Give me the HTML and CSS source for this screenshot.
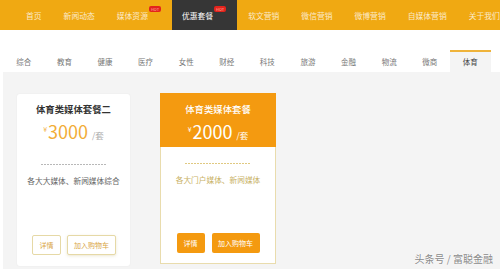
FILE: index.html
```html
<!DOCTYPE html>
<html lang="zh-CN">
<head>
    <meta charset="UTF-8">
    <meta name="viewport" content="width=device-width, initial-scale=1.0">
    <title>优惠套餐</title>
    <link rel="stylesheet" href="styles.css">
</head>
<body>
    <div class="nav">
        <a class="nav-item">首页</a>
        <a class="nav-item">新闻动态</a>
        <a class="nav-item">媒体资源<span class="hot">HOT</span></a>
        <a class="nav-item active">优惠套餐<span class="hot">HOT</span></a>
        <a class="nav-item">软文营销</a>
        <a class="nav-item">微信营销</a>
        <a class="nav-item">微博营销</a>
        <a class="nav-item">自媒体营销</a>
        <a class="nav-item">关于我们</a>
    </div>

    <div class="tabs">
        <div class="tab">综合</div>
        <div class="tab">教育</div>
        <div class="tab">健康</div>
        <div class="tab">医疗</div>
        <div class="tab">女性</div>
        <div class="tab">财经</div>
        <div class="tab">科技</div>
        <div class="tab">旅游</div>
        <div class="tab">金融</div>
        <div class="tab">物流</div>
        <div class="tab">微商</div>
        <div class="tab active">体育</div>
    </div>

    <div class="panel">
        <div class="card">
            <div class="card-head">
                <div class="card-title">体育类媒体套餐二</div>
                <div class="price"><span class="yen">¥</span>3000 <span class="unit">/套</span></div>
            </div>
            <div class="line"></div>
            <div class="desc">各大大媒体、新闻媒体综合</div>
            <div class="btns">
                <button class="btn">详情</button>
                <button class="btn wide">加入购物车</button>
            </div>
        </div>

        <div class="card featured">
            <div class="card-head">
                <div class="card-title">体育类媒体套餐</div>
                <div class="price"><span class="yen">¥</span>2000 <span class="unit">/套</span></div>
            </div>
            <div class="line"></div>
            <div class="desc">各大门户媒体、新闻媒体</div>
            <div class="btns">
                <button class="btn">详情</button>
                <button class="btn wide">加入购物车</button>
            </div>
        </div>
    </div>

    <div class="watermark">头条号 / 富聪金融</div>
</body>
</html>
```

FILE: styles.css
```css
body {
    font-family: "Noto Sans CJK SC", "Noto Sans", sans-serif;
    margin: 0;
    width: 500px;
    height: 269px;
    overflow: hidden;
    position: relative;
    background: #fff;
}
.nav {
    display: flex;
    height: 30px;
    padding-left: 15px;
    background: #f0a912;
    white-space: nowrap;
}
.nav-item {
    display: flex;
    align-items: center;
    padding: 0 11px;
    font-size: 7.8px;
    color: rgba(255, 255, 255, 0.78);
}
.nav-item.active {
    padding-left: 10px;
    background: #363636;
    color: #fff;
}
.hot {
    align-self: flex-start;
    margin: 6px 0 0 1px;
    width: 12px;
    height: 6px;
    line-height: 6px;
    border-radius: 2px;
    background: #e3231c;
    color: #ffb0a0;
    font-size: 4px;
    text-align: center;
}
.tabs {
    display: flex;
    margin-top: 20px;
    padding-left: 3.5px;
}
.tab {
    width: 40.6px;
    height: 20px;
    line-height: 20px;
    border-top: 2px solid transparent;
    text-align: center;
    font-size: 7.5px;
    color: #777;
}
.tab.active {
    border-top-color: #efb33a;
    background: #f4f4f4;
    color: #444;
}
.panel {
    display: flex;
    align-items: flex-start;
    gap: 30px;
    height: 176px;
    margin-left: 3px;
    padding: 21px 0 0 14px;
    background: #f4f4f4;
}
.card {
    display: flex;
    flex-direction: column;
    width: 113px;
    height: 161px;
    margin-top: 1px;
    padding-bottom: 11px;
    background: #fff;
    border-radius: 3px;
    box-shadow: 0 0 2px rgba(0, 0, 0, 0.06);
    text-align: center;
}
.card-head {
    padding-top: 8px;
}
.card-title {
    font-size: 9.4px;
    line-height: 14px;
    font-weight: bold;
    color: #333;
}
.price {
    margin-top: 2px;
    line-height: 22px;
    font-size: 18px;
    color: #f2ad37;
}
.yen {
    font-size: 7px;
    vertical-align: 7px;
    margin-right: 1px;
}
.unit {
    font-size: 8.5px;
    color: #aaa;
}
.line {
    width: 66px;
    height: 1px;
    margin: 18px auto 0;
    background: repeating-linear-gradient(to right, #b8b8b8 0 2px, transparent 2px 3px);
}
.desc {
    margin-top: 10px;
    font-size: 7.7px;
    line-height: 12px;
    color: #666;
}
.btns {
    display: flex;
    justify-content: center;
    gap: 6px;
    margin-top: auto;
    padding-left: 1px;
}
.btn {
    width: 29px;
    height: 20px;
    padding: 0;
    border: 1px solid #e6d9a6;
    border-radius: 2px;
    background: #fff;
    color: #d9a648;
    font-family: inherit;
    font-size: 7px;
}
.btn.wide {
    width: 49px;
    box-shadow: 0 1px 3px rgba(180, 160, 80, 0.25);
}
.featured {
    width: 114px;
    height: 159px;
    margin-top: 0;
    padding-bottom: 10px;
    border: 1px solid #e9dcad;
    border-top-color: #f49a10;
    border-radius: 0;
    box-shadow: none;
}
.featured .card-head {
    padding-bottom: 1px;
    margin: -1px -1px 0;
    padding-top: 9px;
    background: #f49a10;
}
.featured .card-title,
.featured .price,
.featured .unit {
    color: #fff;
}
.featured .card-title {
    font-weight: 500;
}
.featured .line {
    margin-top: 16px;
    background: repeating-linear-gradient(to right, #e0c981 0 2px, transparent 2px 3px);
}
.featured .desc {
    color: #c9b267;
}
.featured .btns {
    gap: 7px;
    padding-left: 0;
}
.featured .btn {
    width: 28px;
    border: none;
    background: #f49a10;
    color: #fff;
}
.featured .btn.wide {
    width: 48px;
    box-shadow: none;
}
.watermark {
    position: absolute;
    right: 7px;
    bottom: 3px;
    font-size: 10px;
    color: #8a8a8a;
    text-shadow: 0 0 2px #fff, 0 0 1px #fff;
}
```
